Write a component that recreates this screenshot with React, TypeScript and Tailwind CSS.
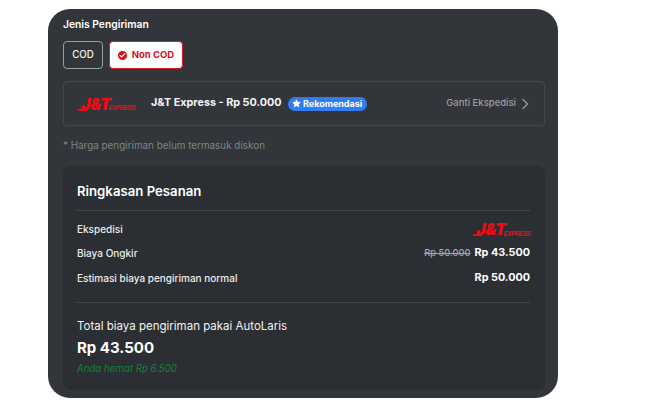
import React from 'react';
import { Check, Star } from 'lucide-react';

const JntLogo: React.FC<{ className?: string }> = ({ className }) => (
  <div className={`relative flex items-end italic text-[#f00a14] font-['Inter',sans-serif] leading-none ${className ?? ''}`}>
    <span className="absolute left-0 bottom-[1px] h-[2px] w-[9px] bg-[#f00a14]" />
    <span className="ml-[3px] text-[16px] font-black tracking-[-0.5px]">J&amp;T</span>
    <span className="-ml-[2px] text-[6.5px] font-bold font-['Liberation_Sans',sans-serif] tracking-[-0.6px]">EXPRESS</span>
  </div>
);

const Row: React.FC<{ label: string; children: React.ReactNode; height: string }> = ({ label, children, height }) => (
  <div className={`flex items-center justify-between ${height}`}>
    <span className="text-[10px] font-medium text-[#eceded]">{label}</span>
    {children}
  </div>
);

const App: React.FC = () => {
  return (
    <div className="w-[650px] h-[410px] bg-white pt-[9px] pl-[48px] font-['Inter',sans-serif] overflow-hidden">
      <div className="w-[510px] h-[389px] rounded-[22px] bg-[#32363a] px-[15px] pt-[8px] flex flex-col">
        <h2 className="text-[10.3px] leading-[15px] font-semibold text-white">Jenis Pengiriman</h2>

        <div className="mt-[9px] flex gap-[6px]">
          <button className="w-[40px] h-[28px] pt-[1px] rounded-[4px] border border-[#9a9da0] text-[9.7px] font-medium text-[#f1f1f1]">COD</button>
          <button className="w-[74px] h-[28px] pt-[1px] rounded-[4px] border border-[#d81a2a] bg-white flex items-center justify-center gap-[5px] text-[9.5px] font-bold text-[#d9101f]">
            <span className="w-[9px] h-[9px] rounded-full bg-[#d9101f] flex items-center justify-center">
              <Check size={7} strokeWidth={4} className="text-white" />
            </span>
            Non COD
          </button>
        </div>

        <div className="mt-[12px] w-[482px] h-[45px] rounded-[4px] border border-[#43474b] flex items-center pl-[14px] pr-[15px]">
          <JntLogo className="w-[58px] shrink-0" />
          <span className="ml-[15px] text-[10.8px] font-bold text-[#f4f4f4]">J&amp;T Express - Rp 50.000</span>
          <span className="ml-[6px] h-[14px] w-[79px] rounded-full bg-[#2f7df0] flex items-center justify-center gap-[2px] text-[9px] font-bold text-white">
            <Star size={9} fill="currentColor" strokeWidth={1} />
            Rekomendasi
          </span>
          <span className="ml-auto text-[9.5px] font-medium text-[#9c9ea1]">Ganti Ekspedisi</span>
          <svg width="8" height="12" viewBox="0 0 8 12" fill="none" stroke="#9c9ea1" strokeWidth={1.2} className="ml-[5px]">
            <path d="M1.5 1 L6.5 6 L1.5 11" />
          </svg>
        </div>

        <p className="mt-[12px] text-[9.9px] leading-[15px] text-[#7f8386]">* Harga pengiriman belum termasuk diskon</p>

        <div className="mt-[13px] w-[482px] h-[224px] rounded-[8px] bg-[#2b2e32] pl-[14px] pr-[15px] flex flex-col">
          <h3 className="h-[45px] flex items-end pb-[8px] border-b border-[#43474b] text-[13.2px] font-semibold text-white">Ringkasan Pesanan</h3>
          <Row label="Ekspedisi" height="h-[36px]">
            <JntLogo />
          </Row>
          <Row label="Biaya Ongkir" height="h-[12px]">
            <div className="flex items-center gap-[4px]">
              <span className="text-[9.3px] font-medium text-[#a5a7a9] line-through">Rp 50.000</span>
              <span className="text-[10.8px] font-bold text-white">Rp 43.500</span>
            </div>
          </Row>
          <Row label="Estimasi biaya pengiriman normal" height="h-[38px]">
            <span className="text-[10.8px] font-bold text-white">Rp 50.000</span>
          </Row>
          <div className="mt-[5px] border-t border-[#43474b] pt-[15px]">
            <p className="text-[11.5px] leading-[16px] text-[#f2f2f2]">Total biaya pengiriman pakai AutoLaris</p>
            <p className="mt-[3px] text-[15px] leading-[22px] font-bold text-white">Rp 43.500</p>
            <p className="mt-[3px] text-[9.7px] leading-[14px] italic text-[#15803d]">Anda hemat Rp 6.500</p>
          </div>
        </div>
      </div>
    </div>
  );
};

export default App;
